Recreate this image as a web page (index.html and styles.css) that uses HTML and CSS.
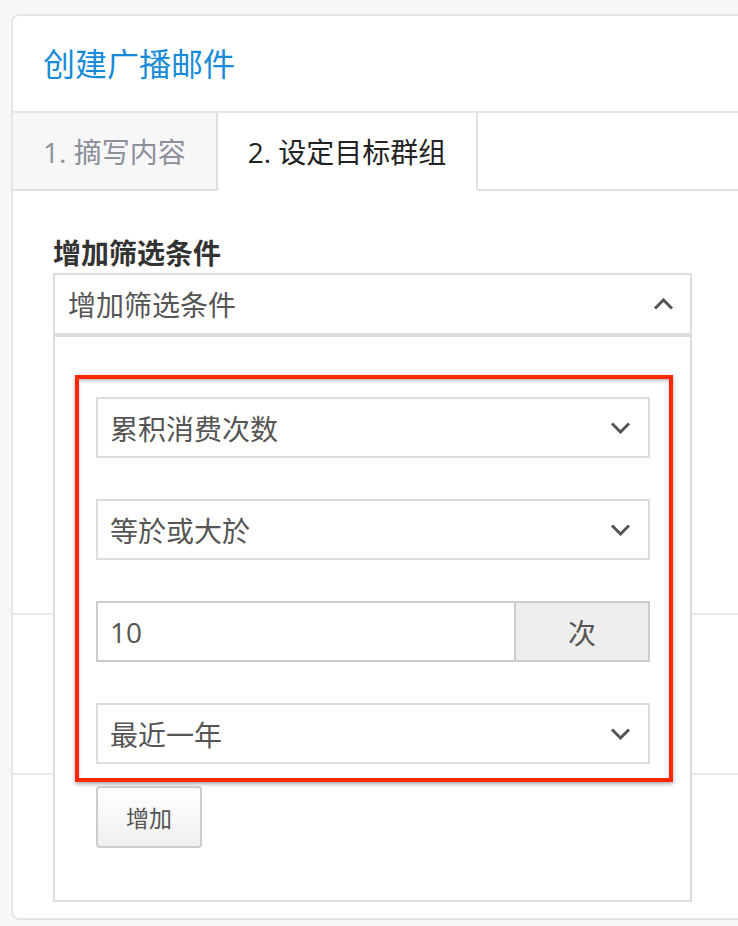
FILE: index.html
```html
<!DOCTYPE html>
<html lang="zh-CN">
<head>
    <meta charset="UTF-8">
    <meta name="viewport" content="width=device-width, initial-scale=1.0">
    <title>创建广播邮件</title>
    <link rel="stylesheet" href="styles.css">
</head>
<body>
    <div class="card">
        <div class="card-header">
            <h2 class="card-title">创建广播邮件</h2>
        </div>

        <div class="tabs">
            <div class="tab">1. 摘写内容</div>
            <div class="tab active">2. 设定目标群组</div>
            <div class="tab-rest"></div>
        </div>

        <div class="form-section">
            <div class="field-label">增加筛选条件</div>
            <div class="dropdown">
                <div class="dropdown-toggle">
                    <span>增加筛选条件</span>
                    <svg class="chevron" width="21" height="12" viewBox="0 0 21 12">
                        <path d="M2 10.5 L10.5 2 L19 10.5" fill="none" stroke="#555" stroke-width="3"/>
                    </svg>
                </div>

                <!-- 展开的筛选面板 -->
                <div class="dropdown-panel">
                    <div class="filter-box">
                        <div class="select-field">
                            <span>累积消费次数</span>
                            <svg class="chevron" width="21" height="12" viewBox="0 0 21 12">
                                <path d="M2 1.5 L10.5 10 L19 1.5" fill="none" stroke="#555" stroke-width="3"/>
                            </svg>
                        </div>
                        <div class="select-field">
                            <span>等於或大於</span>
                            <svg class="chevron" width="21" height="12" viewBox="0 0 21 12">
                                <path d="M2 1.5 L10.5 10 L19 1.5" fill="none" stroke="#555" stroke-width="3"/>
                            </svg>
                        </div>
                        <div class="input-group">
                            <div class="input-value">10</div>
                            <div class="input-addon">次</div>
                        </div>
                        <div class="select-field">
                            <span>最近一年</span>
                            <svg class="chevron" width="21" height="12" viewBox="0 0 21 12">
                                <path d="M2 1.5 L10.5 10 L19 1.5" fill="none" stroke="#555" stroke-width="3"/>
                            </svg>
                        </div>
                    </div>
                    <button class="btn">增加</button>
                </div>
            </div>
        </div>

        <div class="form-row"></div>
        <div class="form-row last"></div>
    </div>
</body>
</html>
```

FILE: styles.css
```css
html, body {
    overflow: hidden;
}
body {
    margin: 0;
    background-color: #f7f7f7;
    font-family: "Open Sans", "Noto Sans CJK SC", sans-serif;
    color: #555;
}
.card {
    margin: 14px 0 0 11px;
    width: 800px;
    background-color: #fff;
    border: 2px solid #e6e6e6;
    border-radius: 8px;
}
.card-header {
    height: 95px;
    display: flex;
    align-items: center;
    padding-left: 30px;
    border-bottom: 2px solid #e6e6e6;
}
.card-title {
    margin: 0;
    font-size: 32px;
    font-weight: normal;
    line-height: 40px;
    color: #178bd7;
}
.tabs {
    display: flex;
    height: 78px;
}
.tab {
    display: flex;
    align-items: center;
    padding: 0 30px;
    font-size: 28px;
    color: #8b909a;
    background-color: #f7f7f8;
    border-right: 2px solid #e0e0e0;
    border-bottom: 2px solid #e0e0e0;
}
.tab.active {
    color: #222;
    background-color: #fff;
    border-bottom-color: transparent;
}
.tab-rest {
    flex: 1;
    border-bottom: 2px solid #e0e0e0;
}
.form-section {
    height: 377px;
    padding: 45px 0 0 40px;
    border-bottom: 2px solid #e8e8e8;
}
.field-label {
    font-size: 28px;
    font-weight: bold;
    line-height: 34px;
    color: #333;
    margin-bottom: 3px;
}
.dropdown {
    position: relative;
    width: 639px;
}
.dropdown-toggle {
    height: 58px;
    display: flex;
    align-items: center;
    justify-content: space-between;
    padding: 0 16px 0 13px;
    border: 2px solid #ddd;
    font-size: 28px;
}
.dropdown-panel {
    position: absolute;
    top: 100%;
    left: 0;
    right: 0;
    z-index: 10;
    background-color: #fff;
    border: 2px solid #ddd;
    padding: 38px 0 52px 20px;
}
.filter-box {
    width: 554px;
    padding: 18px 19px 14px 17px;
    border: 4px solid #ff2600;
    box-shadow: 0 2px 4px rgba(0, 0, 0, 0.35), inset 0 2px 3px rgba(0, 0, 0, 0.25);
    display: flex;
    flex-direction: column;
    gap: 41px;
}
.select-field {
    height: 57px;
    display: flex;
    align-items: center;
    justify-content: space-between;
    padding: 0 17px 0 12px;
    border: 2px solid #ddd;
    font-size: 28px;
}
.input-group {
    display: flex;
    height: 57px;
    border: 2px solid #ccc;
    font-size: 28px;
}
.input-value {
    flex: 1;
    display: flex;
    align-items: center;
    padding-left: 12px;
}
.input-addon {
    width: 132px;
    display: flex;
    align-items: center;
    justify-content: center;
    background-color: #eee;
    border-left: 2px solid #ccc;
}
.btn {
    margin: 4px 0 0 21px;
    width: 106px;
    height: 62px;
    font-family: inherit;
    font-size: 23px;
    color: #555;
    background: linear-gradient(#fff, #efefef);
    border: 2px solid #ccc;
    border-radius: 4px;
}
.form-row {
    height: 158px;
    border-bottom: 2px solid #e8e8e8;
}
.form-row.last {
    height: 143px;
    border-bottom: none;
}
```
